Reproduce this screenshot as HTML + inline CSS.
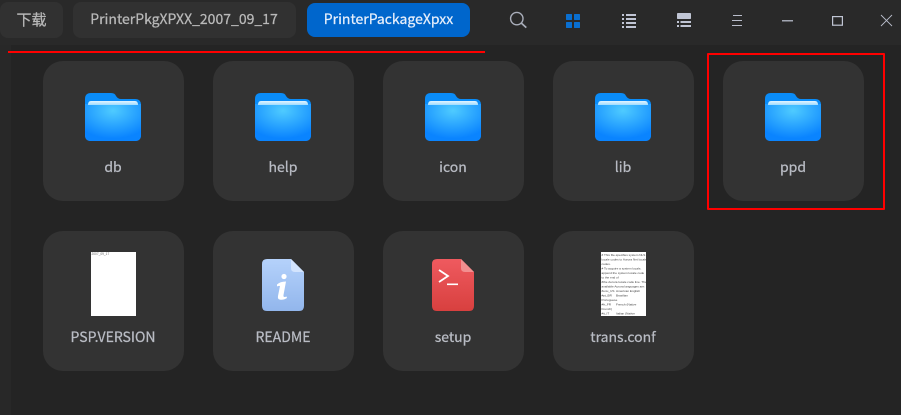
<!DOCTYPE html>
<html lang="en"><head><meta charset="utf-8"><title>Files</title>
<style>
html,body{margin:0;padding:0;width:901px;height:415px;overflow:hidden;background:#242424}
body{position:relative;font-family:"Liberation Sans","Noto Sans CJK SC",sans-serif}
.f{font-family:"Noto Sans CJK SC","Liberation Sans",sans-serif;-webkit-text-stroke:.25px currentColor}
.abs{position:absolute}
.top{left:0;top:0;width:901px;height:45px;background:#292929}
.side{left:0;top:45px;width:11px;height:370px;background:#282828}
.tab{position:absolute;top:2px;height:36px;line-height:35px;background:#313131;border-radius:8px;color:#b9b9b9;font-size:14px;text-align:center}
.card{position:absolute;width:141px;height:140px;background:#333;border-radius:20px}
.label{position:absolute;left:0;width:140px;top:95px;height:22px;line-height:22px;text-align:center;font-size:14px;color:#b9bcc4}
svg{position:absolute;overflow:visible}
</style></head>
<body>
<svg width="0" height="0" style="position:absolute"><defs>
<radialGradient id="fg" cx="50%" cy="18%" r="75%"><stop offset="0" stop-color="#4fcbff"/><stop offset="1" stop-color="#0a84ff"/></radialGradient>
<linearGradient id="hl" x1="0" y1="0" x2="0" y2="1"><stop offset="0" stop-color="#e2f4ff"/><stop offset="1" stop-color="#9fdcff"/></linearGradient>
<linearGradient id="bg1" x1="0" y1="0" x2="0" y2="1"><stop offset="0" stop-color="#b5d2fb"/><stop offset="1" stop-color="#92b6ec"/></linearGradient>
<linearGradient id="rg1" x1="0" y1="0" x2="0" y2="1"><stop offset="0" stop-color="#ef5a5f"/><stop offset="1" stop-color="#d8403f"/></linearGradient>
<clipPath id="docclip"><rect width="45" height="64"/></clipPath>
<symbol id="folder" viewBox="0 0 56 48" overflow="visible">
<path d="M0 6Q0 0 6 0H26Q30 0 31 3Q33 6 36 6H50Q56 6 56 12V42Q56 48 50 48H6Q0 48 0 42Z" fill="#0a8cf8"/>
<path d="M0 11H56V42Q56 48 50 48H6Q0 48 0 42Z" fill="url(#fg)"/>
<path d="M3 12Q3 8 6 8H50Q53 8 53 12Z" fill="url(#hl)"/>
</symbol>
</defs></svg>

<div class="abs top"></div>
<div class="abs side"></div>

<div class="tab f" style="left:0;width:63px;font-size:15px">下载</div>
<div class="tab f" style="left:73px;width:222px;padding-right:1px">PrinterPkgXPXX_2007_09_17</div>
<div class="tab f" style="left:307px;top:3px;width:163px;height:34px;line-height:33px;background:#0066cc;color:#e6eefb">PrinterPackageXpxx</div>

<!-- search -->
<svg style="left:509px;top:11px" width="20" height="20" fill="none" stroke="#a9aeba" stroke-width="1.4"><circle cx="7.8" cy="7.6" r="6.2"/><path d="M12.2 12L17.3 16.6" stroke-width="1.7"/></svg>
<!-- grid -->
<svg style="left:566px;top:14px" width="14" height="14" fill="#0a6fd0"><rect width="6" height="6" rx=".6"/><rect x="8" width="6" height="6" rx=".6"/><rect y="8" width="6" height="6" rx=".6"/><rect x="8" y="8" width="6" height="6" rx=".6"/></svg>
<!-- list -->
<svg style="left:622px;top:14px" width="14" height="14" fill="#c0c5d4"><rect y="0" width="2" height="2"/><rect x="4" y="0" width="10" height="2"/><rect y="4" width="2" height="2"/><rect x="4" y="4" width="10" height="2"/><rect y="8" width="2" height="2"/><rect x="4" y="8" width="10" height="2"/><rect y="12" width="2" height="2"/><rect x="4" y="12" width="10" height="2"/></svg>
<!-- compact -->
<svg style="left:677px;top:13px" width="14" height="15" fill="#c0c5d4"><rect width="14" height="6" rx=".8"/><rect y="8" width="2" height="2"/><rect x="3.5" y="8" width="10.5" height="2"/><rect y="12" width="2" height="2"/><rect x="3.5" y="12" width="10.5" height="2"/></svg>
<!-- menu -->
<svg style="left:732px;top:15px" width="11" height="11" stroke="#b9bdcb" stroke-width="1"><path d="M1 .5H10M0 5.5H10M0 10.5H10" fill="none"/></svg>
<!-- minimize -->
<svg style="left:782px;top:20px" width="11" height="2" fill="#c0c5d4"><rect y=".2" width="11" height="1.2"/></svg>
<!-- maximize -->
<svg style="left:832px;top:16px" width="11" height="10" fill="none" stroke="#c0c5d4" stroke-width="1.2"><rect x=".6" y=".6" width="9.8" height="8.6"/></svg>
<!-- close -->
<svg style="left:881px;top:15px" width="11" height="11" fill="none" stroke="#b9bdcb" stroke-width=".9"><path d="M0 0L11 11M11 0L0 11"/></svg>

<!-- row 1 -->
<div class="card" style="left:43px;top:61px"><svg style="left:42px;top:32px" width="56" height="48"><use href="#folder"/></svg><div class="label f">db</div></div>
<div class="card" style="left:213px;top:61px"><svg style="left:42px;top:32px" width="56" height="48"><use href="#folder"/></svg><div class="label f">help</div></div>
<div class="card" style="left:383px;top:61px"><svg style="left:42px;top:32px" width="56" height="48"><use href="#folder"/></svg><div class="label f">icon</div></div>
<div class="card" style="left:553px;top:61px"><svg style="left:42px;top:32px" width="56" height="48"><use href="#folder"/></svg><div class="label f">lib</div></div>
<div class="card" style="left:723px;top:61px"><svg style="left:42px;top:32px" width="56" height="48"><use href="#folder"/></svg><div class="label f">ppd</div></div>

<!-- row 2 -->
<div class="card" style="left:43px;top:231px">
<svg style="left:48px;top:21px" width="45" height="64"><rect width="45" height="64" fill="#fff"/><text x=".5" y="3" font-size="3.2" fill="#666" font-family="Liberation Sans">2007_09_17</text></svg>
<div class="label f">PSP.VERSION</div></div>

<div class="card" style="left:213px;top:231px">
<svg style="left:49px;top:28px" width="42" height="52">
<path d="M0 5Q0 0 5 0H29L42 13V47Q42 52 37 52H5Q0 52 0 47Z" fill="url(#bg1)"/>
<path d="M29 0L42 13H33Q29 13 29 9Z" fill="#d3e4fd"/>
<circle cx="22" cy="17.5" r="2.6" fill="#fff"/>
<path d="M15 25.5Q18 22.5 24 22.5L21.5 36Q21 39 24.5 37.5L25 39Q21 41.5 17.5 40.5Q15.5 40 16 37L18 27Q16.5 26.5 15 27.5Z" fill="#fff"/>
</svg>
<div class="label f">README</div></div>

<div class="card" style="left:383px;top:231px">
<svg style="left:49px;top:28px" width="42" height="52">
<path d="M0 5Q0 0 5 0H29L42 13V47Q42 52 37 52H5Q0 52 0 47Z" fill="url(#rg1)"/>
<path d="M29 0L42 13H33Q29 13 29 9Z" fill="#f28f90"/>
<path d="M7 11L16 17L7 23" fill="none" stroke="#fff" stroke-width="1.8"/>
<rect x="15" y="24.5" width="11" height="1.6" fill="#fff"/>
</svg>
<div class="label f">setup</div></div>

<div class="card" style="left:553px;top:231px">
<svg style="left:48px;top:21px" width="45" height="64"><rect width="45" height="64" fill="#fff"/>
<g font-size="3.1" fill="#444" font-family="Liberation Sans" clip-path="url(#docclip)">
<text x=".5" y="4"># This file-specifies system NLS</text>
<text x=".5" y="8.5">locale codes to Aurora Net locale</text>
<text x=".5" y="13">codes.</text>
<text x=".5" y="17.5"># To acquire a system locale,</text>
<text x=".5" y="22">append the system locale code</text>
<text x=".5" y="26.5">to the end of</text>
<text x=".5" y="31">#the Aurora locale code line. The</text>
<text x=".5" y="35.5">available Aurora languages are:</text>
<text x=".5" y="40">#enu_US</text><text x="15" y="40">American English</text>
<text x=".5" y="44.5">#pt_BR</text><text x="15" y="44.5">Brazilian</text>
<text x=".5" y="49">Portuguese</text>
<text x=".5" y="53.5">#fr_FR</text><text x="15" y="53.5">French (Native</text>
<text x=".5" y="58">French)</text>
<text x=".5" y="62.5">#it_IT</text><text x="15" y="62.5">Italian (Native</text>
</g></svg>
<div class="label f">trans.conf</div></div>

<!-- annotations -->
<div class="abs" style="left:8px;top:51px;width:477px;height:2px;background:#f00"></div>
<div class="abs" style="left:707px;top:53px;width:174px;height:153px;border:2px solid #f00;border-radius:1px"></div>
</body></html>
